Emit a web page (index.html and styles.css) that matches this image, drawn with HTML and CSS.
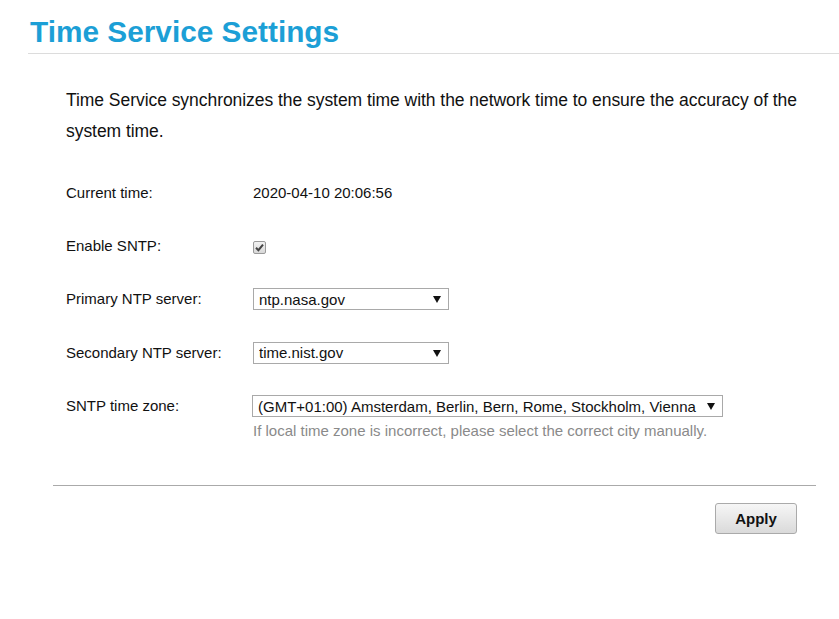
FILE: index.html
```html
<!DOCTYPE html>
<html lang="en">

<head>
    <meta charset="UTF-8">
    <meta name="viewport" content="width=device-width, initial-scale=1.0">
    <title>Time Service Settings</title>
    <link rel="stylesheet" href="styles.css">
</head>

<body>
    <div class="page">
        <div class="page-header">
            <h1>Time Service Settings</h1>
        </div>

        <div class="content">
            <p class="intro">Time Service synchronizes the system time with the network time to ensure the accuracy of the<br>system time.</p>

            <div class="form">
                <div class="form-row">
                    <div class="form-label">Current time:</div>
                    <div class="form-value">2020-04-10 20:06:56</div>
                </div>
                <div class="form-row">
                    <div class="form-label">Enable SNTP:</div>
                    <div class="form-value">
                        <span class="checkbox">
                            <svg width="9" height="9" viewBox="0 0 9 9">
                                <path d="M1 4.8 L3.4 7.2 L8 1.6" fill="none" stroke="#444" stroke-width="2"/>
                            </svg>
                        </span>
                    </div>
                </div>
                <div class="form-row">
                    <div class="form-label">Primary NTP server:</div>
                    <div class="form-value">
                        <span class="select-wrap select-short">
                            <select class="select">
                                <option>ntp.nasa.gov</option>
                            </select>
                        </span>
                    </div>
                </div>
                <div class="form-row">
                    <div class="form-label">Secondary NTP server:</div>
                    <div class="form-value">
                        <span class="select-wrap select-short">
                            <select class="select">
                                <option>time.nist.gov</option>
                            </select>
                        </span>
                    </div>
                </div>
                <div class="form-row form-row-top">
                    <div class="form-label">SNTP time zone:</div>
                    <div class="form-value">
                        <span class="select-wrap select-long">
                            <select class="select">
                                <option>(GMT+01:00) Amsterdam, Berlin, Bern, Rome, Stockholm, Vienna</option>
                            </select>
                        </span>
                        <div class="hint">If local time zone is incorrect, please select the correct city manually.</div>
                    </div>
                </div>
            </div>
        </div>

        <div class="actions">
            <button class="btn" type="button">Apply</button>
        </div>
    </div>
</body>

</html>
```

FILE: styles.css
```css
* {
    margin: 0;
    padding: 0;
    box-sizing: border-box;
}

body {
    font-family: 'Liberation Sans', Arial, sans-serif;
    background: #fff;
    color: #111;
}

.page {
    padding-left: 28px;
}

.page-header {
    padding: 16px 0 5px 2px;
    border-bottom: 1px solid #dcdcdc;
}

.page-header h1 {
    font-size: 29.8px;
    font-weight: 700;
    line-height: 32px;
    color: #1c9fd6;
}

.content {
    padding: 31px 0 0 38px;
}

.intro {
    font-size: 17.5px;
    letter-spacing: -0.05px;
    line-height: 31px;
    white-space: nowrap;
}

.form {
    margin-top: 35px;
}

.form-row {
    display: flex;
    align-items: center;
    min-height: 22px;
    margin-bottom: 31px;
    font-size: 15px;
}

.form-row:last-child {
    margin-bottom: 0;
}

.form-row-top {
    align-items: flex-start;
}

.form-label {
    width: 187px;
    line-height: 22px;
}

.form-value {
    line-height: 22px;
}

/* checkbox (disabled look) */
.checkbox {
    display: inline-flex;
    align-items: center;
    justify-content: center;
    width: 13px;
    height: 13px;
    border: 1px solid #9a9a9a;
    border-radius: 2px;
    background: linear-gradient(#f2f2f2, #d8d8d8);
    vertical-align: middle;
}

.select-wrap {
    position: relative;
    display: inline-block;
}

.select-wrap::after {
    content: '';
    position: absolute;
    right: 8px;
    top: 8px;
    border-left: 4px solid transparent;
    border-right: 4px solid transparent;
    border-top: 7px solid #111;
    pointer-events: none;
}

.select {
    appearance: none;
    -webkit-appearance: none;
    display: block;
    height: 22px;
    padding: 0 20px 0 5px;
    border: 1px solid #a9a9a9;
    border-radius: 0;
    background: #fff;
    font-family: inherit;
    font-size: 15px;
    color: #111;
}

.select-short .select {
    width: 196px;
}

.select-long {
    margin-left: -1px;
}

.select-long .select {
    width: 471px;
}

.hint {
    margin-top: 5px;
    font-size: 15px;
    line-height: 16px;
    color: #8a8a8a;
}

.actions {
    margin: 46px 23px 0 25px;
    padding-top: 17px;
    border-top: 1px solid #aaa;
    text-align: right;
}

.btn {
    width: 82px;
    height: 31px;
    border: 1px solid #aaa;
    border-radius: 3px;
    background: linear-gradient(#f6f6f6, #dadada);
    font-family: inherit;
    font-size: 15px;
    font-weight: 700;
    color: #111;
    margin-right: 19px;
}
```
